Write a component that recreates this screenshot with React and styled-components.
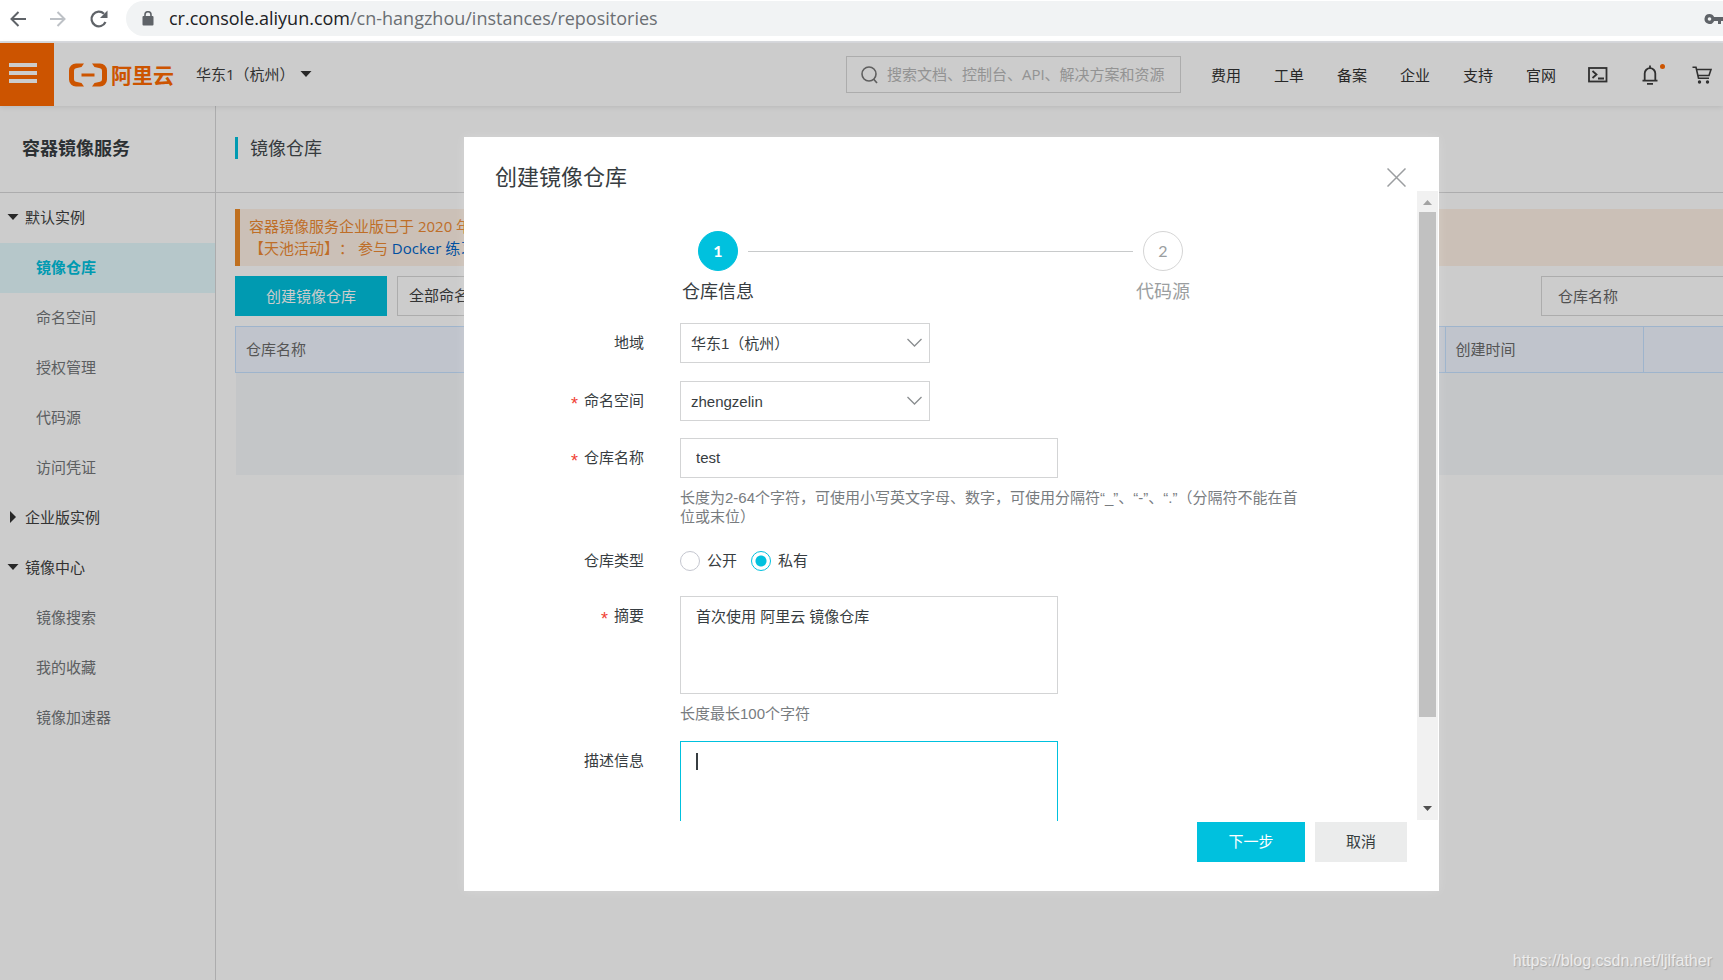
import React from 'react';
import styled, { createGlobalStyle, css } from 'styled-components';

const Global = createGlobalStyle`
  *, *::before, *::after { box-sizing: border-box; }
  html, body, #root { height: 100%; }
  body {
    margin: 0;
    overflow: hidden;
    background: #fff;
    color: #373d41;
    font-family: "Liberation Sans", "Noto Sans CJK SC", sans-serif;
    font-size: 15px;
    line-height: 22px;
    text-spacing-trim: space-all;
  }
  button, input, select, textarea { font: inherit; color: inherit; margin: 0; border-radius: 0; }
  button { padding: 0; border: 0; background: none; cursor: pointer; }
  a { color: inherit; text-decoration: none; }
  h1, h2, p, ul, ol { margin: 0; padding: 0; font-weight: 400; }
  ul, ol { list-style: none; }
`;

const Window = styled.div`
  height: 100vh;
  display: flex;
  flex-direction: column;
`;

/* ---------- browser bar ---------- */

const BrowserBar = styled.div`
  display: flex;
  align-items: flex-start;
  height: 43px;
  flex: none;
  padding-top: 1px;
  border-bottom: 2px solid #dadce0;
`;

const BrowserButtons = styled.div`
  display: flex;
  align-items: center;
  gap: 20px;
  width: 126px;
  height: 35px;
  padding-left: 8px;
  button { display: flex; }
`;

const AddressBar = styled.div`
  flex: 1;
  display: flex;
  align-items: center;
  height: 35px;
  padding-left: 16px;
  border-radius: 18px 0 0 18px;
  background: #f1f3f4;
`;

const Address = styled.div`
  flex: 1;
  margin-left: 15px;
  padding-bottom: 2px;
  font-family: "Open Sans", sans-serif;
  font-size: 18px;
  color: #6b6f73;
  b { font-weight: 400; color: #202124; }
`;

/* ---------- console ---------- */

const Console = styled.div`
  position: relative;
  flex: 1;
  min-height: 0;
  display: flex;
  flex-direction: column;
  font-family: "Open Sans", "Noto Sans CJK SC", sans-serif;
`;

const TopBar = styled.header`
  position: relative;
  display: flex;
  align-items: center;
  height: 63px;
  flex: none;
  padding-right: 11px;
  box-shadow: 0 1px 5px rgba(0, 0, 0, 0.1);
`;

const MenuButton = styled.button`
  display: flex;
  flex-direction: column;
  justify-content: center;
  gap: 4px;
  width: 54px;
  height: 63px;
  padding: 0 17px 3px 9px;
  background: #ff6a00;
  i { height: 4px; background: #fff; }
`;

const Logo = styled.a`
  display: flex;
  align-items: center;
  gap: 4px;
  margin-left: 15px;
  color: #ff6a00;
  font-size: 21px;
  font-weight: 700;
`;

const Region = styled.button`
  display: flex;
  align-items: center;
  gap: 5px;
  margin-left: 22px;
  padding-bottom: 1px;
  color: #404040;
`;

const TopSearch = styled.label`
  display: flex;
  align-items: center;
  gap: 9px;
  width: 335px;
  height: 37px;
  margin: 0 30px 0 auto;
  padding: 0 14px;
  border: 1px solid #d8d8d8;
  input {
    flex: 1;
    min-width: 0;
    padding: 0 0 2px;
    border: 0;
    outline: 0;
    background: none;
  }
  input::placeholder { color: #b8b8b8; opacity: 1; }
`;

const TopNav = styled.nav`
  display: flex;
  gap: 33px;
  color: #333;
`;

const TopIcons = styled.div`
  display: flex;
  gap: 32px;
  margin-left: 32px;
  button { display: flex; position: relative; }
`;

const Dot = styled.span`
  position: absolute;
  top: -1px;
  right: -5px;
  width: 5px;
  height: 5px;
  border-radius: 50%;
  background: #ff6a00;
`;

const Columns = styled.div`
  flex: 1;
  min-height: 0;
  display: flex;
`;

const Sidebar = styled.aside`
  width: 216px;
  flex: none;
  border-right: 1px solid #d7d8d9;
`;

const SideTitle = styled.h1`
  height: 87px;
  padding: 0 22px;
  border-bottom: 1px solid #d7d8d9;
  font-size: 18px;
  font-weight: 700;
  line-height: 84px;
  color: #373d41;
`;

const SideGroup = styled.button`
  display: flex;
  align-items: center;
  gap: 6px;
  width: 100%;
  height: 50px;
  padding: 0 0 2px 7px;
  color: #404040;
  svg { width: 12px; }
`;

const SideItem = styled.a`
  display: block;
  padding: 0 0 2px 36px;
  line-height: 48px;
  color: #737679;
  ${p => p.$active && css`
    background: #e4f9fd;
    color: #00c1de;
    font-weight: 700;
  `}
`;

const Main = styled.main`
  flex: 1;
  min-width: 0;
`;

const PageTitle = styled.div`
  display: flex;
  align-items: center;
  height: 87px;
  padding: 0 0 2px 19px;
  border-bottom: 1px solid #d7d8d9;
  h2 {
    padding-left: 12px;
    border-left: 3px solid #00c1de;
    font-size: 18px;
    line-height: 22px;
    color: #444a4e;
  }
`;

const MainBody = styled.div`
  padding: 16px 0 0 19px;
`;

const Notice = styled.div`
  height: 57px;
  padding: 6px 9px;
  border-left: 5px solid #ef8c28;
  background: #fef1e5;
  color: #ee8a33;
  a { color: #0064c8; }
`;

const Toolbar = styled.div`
  display: flex;
  gap: 10px;
  margin: 10px 0;
`;

const PrimaryButton = styled.button`
  height: 40px;
  width: ${p => p.$width};
  padding-bottom: 1px;
  background: #00c1de;
  color: #fff;
`;

const ToolSelect = styled.select`
  appearance: none;
  width: 180px;
  height: 40px;
  padding: 0 11px 2px;
  border: 1px solid #d8d8d8;
  background: none;
  color: #404040;
`;

const FilterSelect = styled(ToolSelect)`
  width: 182px;
  margin-left: auto;
  padding: 0 16px;
  border-right: 0;
  color: #666;
`;

const Repos = styled.table`
  width: 100%;
  table-layout: fixed;
  border-collapse: collapse;
  th {
    height: 46px;
    padding: 0 10px 2px;
    border: 1px solid #c6e1ff;
    border-right: 0;
    background: #f0f5ff;
    color: #6b6b6b;
    font-weight: 400;
    text-align: left;
  }
  td { height: 102px; background: #f5f8fa; }
`;

/* ---------- dialog ---------- */

const Overlay = styled.div`
  position: absolute;
  inset: 0;
  display: flex;
  padding: 94px 284px 89px 464px;
  background: rgba(0, 0, 0, 0.2);
`;

const Dialog = styled.section`
  flex: 1;
  min-width: 0;
  display: flex;
  flex-direction: column;
  background: #fff;
  box-shadow: 0 0 10px rgba(255, 255, 255, 0.2);
  font-family: "Liberation Sans", "Noto Sans CJK SC", sans-serif;
`;

const DialogHead = styled.header`
  display: flex;
  align-items: flex-start;
  justify-content: space-between;
  height: 54px;
  flex: none;
  padding: 28px 33px 0 31px;
  h2 { font-size: 22px; line-height: 26px; }
  button { display: flex; padding-top: 3px; }
`;

const DialogBody = styled.div`
  flex: 1;
  min-height: 0;
  display: flex;
  padding-right: 1px;
`;

const ScrollArea = styled.div`
  flex: 1;
  min-width: 0;
  overflow: hidden;
  padding-top: 40px;
`;

const ScrollRail = styled.div`
  display: flex;
  flex-direction: column;
  align-items: center;
  width: 21px;
  margin-bottom: 1px;
  background: #f1f1f1;
  svg { height: 21px; flex: none; }
`;

const ScrollTrack = styled.div`
  flex: 1;
  width: 17px;
  i { display: block; height: 86%; background: #c1c1c1; }
`;

const Steps = styled.ol`
  display: flex;
  max-width: 485px;
  margin: 0 auto 19px;
`;

const Step = styled.li`
  display: flex;
  flex-direction: column;
  align-items: center;
  gap: 9px;
  width: 40px;
  color: ${p => (p.$active ? '#373d41' : '#9b9ea0')};
  font-size: 18px;
  line-height: 24px;
  white-space: nowrap;
`;

const StepNumber = styled.span`
  width: 40px;
  height: 40px;
  border: 1px solid ${p => (p.$active ? '#00c1de' : '#d5d5d5')};
  border-radius: 50%;
  background: ${p => (p.$active ? '#00c1de' : '#fff')};
  color: ${p => (p.$active ? '#fff' : '#9b9ea0')};
  font-family: Lato, sans-serif;
  font-size: 16px;
  font-weight: ${p => (p.$active ? 700 : 400)};
  line-height: 38px;
  text-align: center;
`;

const StepLine = styled.li`
  flex: 1;
  height: 1px;
  margin: 20px 10px 0;
  background: #c8cacb;
`;

const Row = styled.div`
  display: grid;
  grid-template-columns: 180px minmax(0, 628px);
  column-gap: 36px;
  margin-bottom: ${p => (p.$tight ? '17px' : '18px')};
  line-height: ${p => (p.$short ? '34px' : '40px')};
`;

const Label = styled.label`
  text-align: right;
  ${p => p.$required && css`
    &::before { content: '*'; margin-right: 6px; color: #f04134; font-size: 18px; vertical-align: -4px; line-height: 20px; }
  `}
`;

const SelectBox = styled.div`
  display: grid;
  align-items: center;
  width: 250px;
  select, svg { grid-area: 1 / 1; }
  svg { justify-self: end; margin-right: 7px; pointer-events: none; }
`;

const Select = styled.select`
  appearance: none;
  width: 100%;
  height: 40px;
  padding: 0 10px;
  border: 1px solid #d3d4d5;
  outline: 0;
  background: #fff;
`;

const field = css`
  display: block;
  width: 378px;
  max-width: 100%;
  border: 1px solid ${p => (p.$focused ? '#00c1de' : '#d3d4d5')};
  outline: 0;
  background: #fff;
`;

const TextInput = styled.input`
  ${field}
  height: 40px;
  padding: 0 15px;
`;

const TextArea = styled.textarea`
  ${field}
  height: 98px;
  padding: 9px 15px;
  line-height: 22px;
  resize: none;
`;

const Editing = styled.div`
  position: relative;
`;

const Caret = styled.span`
  position: absolute;
  left: 16px;
  top: 12px;
  width: 2px;
  height: 17px;
  background: #373d41;
`;

const Help = styled.p`
  padding-top: 10px;
  line-height: 19px;
  color: #787c7f;
`;

const Choices = styled.div`
  display: flex;
  gap: 14px;
`;

const Choice = styled.label`
  display: flex;
  align-items: center;
  gap: 7px;
  input {
    appearance: none;
    width: 20px;
    height: 20px;
    border: 1px solid #c4c6cf;
    border-radius: 50%;
    background: #fff;
  }
  input:checked {
    border-color: #00c1de;
    background: radial-gradient(circle, #00c1de 5px, #fff 6px);
  }
`;

const DialogFoot = styled.footer`
  display: flex;
  justify-content: flex-end;
  gap: 10px;
  flex: none;
  padding: 1px 32px 29px;
`;

const CancelButton = styled.button`
  width: 92px;
  height: 40px;
  padding-bottom: 1px;
  background: #ebecec;
`;

const Watermark = styled.span`
  position: absolute;
  right: 11px;
  bottom: 8px;
  font-family: "Liberation Sans", sans-serif;
  font-size: 16px;
  color: #ececec;
  text-shadow: 1px 1px 1px #a9a9a9;
`;

/* ---------- drawings ---------- */

const CaretDown = () => (
  <svg width="12" height="12" viewBox="0 0 12 12"><path d="M0.500 3h11L6 9z" fill="#333" /></svg>
);
const CaretRight = () => (
  <svg width="12" height="12" viewBox="0 0 12 12"><path d="M3 0l6 6-6 6z" fill="#333" /></svg>
);
const Chevron = () => (
  <svg width="17" height="10" viewBox="0 0 17 10" fill="none" stroke="#8a8d8f" strokeWidth="1.3">
    <path d="M1.5 1l7 7 7-7" />
  </svg>
);

const sideMenu = [
  { title: '默认实例', open: true, items: ['镜像仓库', '命名空间', '授权管理', '代码源', '访问凭证'] },
  { title: '企业版实例', open: false, items: [] },
  { title: '镜像中心', open: true, items: ['镜像搜索', '我的收藏', '镜像加速器'] },
];

const topLinks = ['费用', '工单', '备案', '企业', '支持', '官网'];

export default function App() {
  return (
    <Window>
      <Global />
      <BrowserBar>
        <BrowserButtons>
          <button aria-label="后退">
            <svg width="20" height="20" viewBox="0 0 20 20" fill="none" stroke="#5f6368" strokeWidth="2"><path d="M18 10H4M10.500 3L3.500 10l7 7" /></svg>
          </button>
          <button aria-label="前进">
            <svg width="20" height="20" viewBox="0 0 20 20" fill="none" stroke="#bdc1c6" strokeWidth="2"><path d="M2 10h14M9.500 3l7 7-7 7" /></svg>
          </button>
          <button aria-label="重新加载">
            <svg width="20" height="20" viewBox="0 0 20 20"><path d="M17.500 13A7.300 7.300 0 1 1 16 4.800" fill="none" stroke="#5f6368" strokeWidth="2.200" /><path d="M19.500 1.500v7.500h-7.500z" fill="#5f6368" /></svg>
          </button>
        </BrowserButtons>
        <AddressBar>
          <svg width="12" height="16" viewBox="0 0 12 16"><rect x="0.500" y="5" width="11" height="9.500" rx="1" fill="#5f6368" /><path d="M3 6V3.700a3 3 0 0 1 6 0V6" fill="none" stroke="#5f6368" strokeWidth="1.600" /></svg>
          <Address><b>cr.console.aliyun.com</b>/cn-hangzhou/instances/repositories</Address>
          <svg width="19" height="12" viewBox="0 0 19 12"><path d="M5.500 1a5 5 0 1 0 4.600 7H14v3h3V8h2V4h-8.900A5 5 0 0 0 5.500 1z" fill="#5f6368" /><circle cx="5.500" cy="6" r="1.800" fill="#f1f3f4" /></svg>
        </AddressBar>
      </BrowserBar>

      <Console>
        <TopBar>
          <MenuButton aria-label="菜单"><i /><i /><i /></MenuButton>
          <Logo href="#">
            <svg width="38" height="24" viewBox="0 0 38 24" fill="currentColor">
              <path d="M15 0.500H7a7 7 0 0 0-7 7v9a7 7 0 0 0 7 7h8l-2.500-3.500-5.500-1.300a2.500 2.500 0 0 1-2-2.500V7.800a2.500 2.500 0 0 1 2-2.500L12.500 4z" />
              <path d="M23 0.500h8a7 7 0 0 1 7 7v9a7 7 0 0 1-7 7h-8l2.500-3.500 5.500-1.300a2.500 2.500 0 0 0 2-2.500V7.800a2.500 2.500 0 0 0-2-2.500L25.500 4z" />
              <rect x="12.500" y="10.500" width="13" height="3" />
            </svg>
            阿里云
          </Logo>
          <Region>华东1（杭州）<CaretDown /></Region>
          <TopSearch>
            <svg width="17" height="18" viewBox="0 0 17 18" fill="none" stroke="#777" strokeWidth="1.600"><circle cx="8" cy="8" r="7" /><path d="M12.500 13l3.500 4" /></svg>
            <input aria-label="搜索" placeholder="搜索文档、控制台、API、解决方案和资源" />
          </TopSearch>
          <TopNav>{topLinks.map(t => <a href="#" key={t}>{t}</a>)}</TopNav>
          <TopIcons>
            <button aria-label="云命令行">
              <svg width="20" height="20" viewBox="0 0 20 20" fill="none" stroke="#3c3c3c" strokeWidth="1.800"><rect x="1" y="3" width="17.500" height="13.500" /><path d="M4.500 6l4 3.500-4 3.500M10 13.500h6" /></svg>
            </button>
            <button aria-label="消息">
              <svg width="20" height="20" viewBox="0 0 20 20" fill="none" stroke="#3c3c3c" strokeWidth="1.800"><path d="M2.500 15.700h15M4.700 15.500V8.500a5.300 5.300 0 0 1 10.600 0v7M10 0.500v2.500M7 18.800h6" /></svg>
              <Dot />
            </button>
            <button aria-label="购物车">
              <svg width="20" height="20" viewBox="0 0 20 20" fill="none" stroke="#3c3c3c" strokeWidth="1.600"><path d="M0.500 2.300h3.500l2.500 11h10.500M4.500 4.500h14.500l-2 6H6" /><circle cx="7.500" cy="17" r="1.700" fill="#3c3c3c" stroke="none" /><circle cx="15.500" cy="17" r="1.700" fill="#3c3c3c" stroke="none" /></svg>
            </button>
          </TopIcons>
        </TopBar>

        <Columns>
          <Sidebar>
            <SideTitle>容器镜像服务</SideTitle>
            {sideMenu.map(g => (
              <React.Fragment key={g.title}>
                <SideGroup>{g.open ? <CaretDown /> : <CaretRight />}{g.title}</SideGroup>
                {g.items.map(t => <SideItem href="#" key={t} $active={t === '镜像仓库'}>{t}</SideItem>)}
              </React.Fragment>
            ))}
          </Sidebar>
          <Main>
            <PageTitle><h2>镜像仓库</h2></PageTitle>
            <MainBody>
              <Notice>
                <p>容器镜像服务企业版已于 2020 年</p>
                <p>【天池活动】： 参与 <a href="#">Docker 练习</a></p>
              </Notice>
              <Toolbar>
                <PrimaryButton $width="152px">创建镜像仓库</PrimaryButton>
                <ToolSelect aria-label="命名空间筛选"><option>全部命名空间</option></ToolSelect>
                <FilterSelect aria-label="搜索字段"><option>仓库名称</option></FilterSelect>
              </Toolbar>
              <Repos>
                <colgroup><col /><col style={{ width: 198 }} /><col style={{ width: 80 }} /></colgroup>
                <thead><tr><th>仓库名称</th><th>创建时间</th><th /></tr></thead>
                <tbody><tr><td colSpan={3} /></tr></tbody>
              </Repos>
            </MainBody>
          </Main>
        </Columns>

        <Overlay>
          <Dialog role="dialog" aria-labelledby="dialog-title">
            <DialogHead>
              <h2 id="dialog-title">创建镜像仓库</h2>
              <button aria-label="关闭">
                <svg width="19" height="19" viewBox="0 0 19 19" stroke="#9b9ea0" strokeWidth="1.500"><path d="M0.500 0.500l18 18M18.500 0.500l-18 18" /></svg>
              </button>
            </DialogHead>
            <DialogBody>
              <ScrollArea>
                <Steps>
                  <Step $active><StepNumber $active>1</StepNumber>仓库信息</Step>
                  <StepLine aria-hidden="true" />
                  <Step><StepNumber>2</StepNumber>代码源</Step>
                </Steps>
                <Row>
                  <Label htmlFor="region">地域</Label>
                  <SelectBox><Select id="region"><option>华东1（杭州）</option></Select><Chevron /></SelectBox>
                </Row>
                <Row $tight>
                  <Label htmlFor="ns" $required>命名空间</Label>
                  <SelectBox><Select id="ns"><option>zhengzelin</option></Select><Chevron /></SelectBox>
                </Row>
                <Row>
                  <Label htmlFor="name" $required>仓库名称</Label>
                  <div>
                    <TextInput id="name" defaultValue="test" />
                    <Help>长度为2-64个字符，可使用小写英文字母、数字，可使用分隔符“_”、“-”、“.”（分隔符不能在首位或末位）</Help>
                  </div>
                </Row>
                <Row $short role="radiogroup" aria-labelledby="type">
                  <Label as="span" id="type">仓库类型</Label>
                  <Choices>
                    <Choice><input type="radio" name="type" />公开</Choice>
                    <Choice><input type="radio" name="type" defaultChecked />私有</Choice>
                  </Choices>
                </Row>
                <Row>
                  <Label htmlFor="summary" $required>摘要</Label>
                  <div>
                    <TextArea id="summary" defaultValue="首次使用 阿里云 镜像仓库" />
                    <Help>长度最长100个字符</Help>
                  </div>
                </Row>
                <Row>
                  <Label htmlFor="desc">描述信息</Label>
                  <Editing><TextArea id="desc" $focused /><Caret /></Editing>
                </Row>
              </ScrollArea>
              <ScrollRail aria-hidden="true">
                <svg width="21" height="21" viewBox="0 0 21 21"><path d="M6 14h9l-4.500-5z" fill="#a3a3a3" /></svg>
                <ScrollTrack><i /></ScrollTrack>
                <svg width="21" height="21" viewBox="0 0 21 21"><path d="M6 7h9l-4.500 5z" fill="#505050" /></svg>
              </ScrollRail>
            </DialogBody>
            <DialogFoot>
              <PrimaryButton $width="108px">下一步</PrimaryButton>
              <CancelButton>取消</CancelButton>
            </DialogFoot>
          </Dialog>
        </Overlay>
        <Watermark>https://blog.csdn.net/ljlfather</Watermark>
      </Console>
    </Window>
  );
}
